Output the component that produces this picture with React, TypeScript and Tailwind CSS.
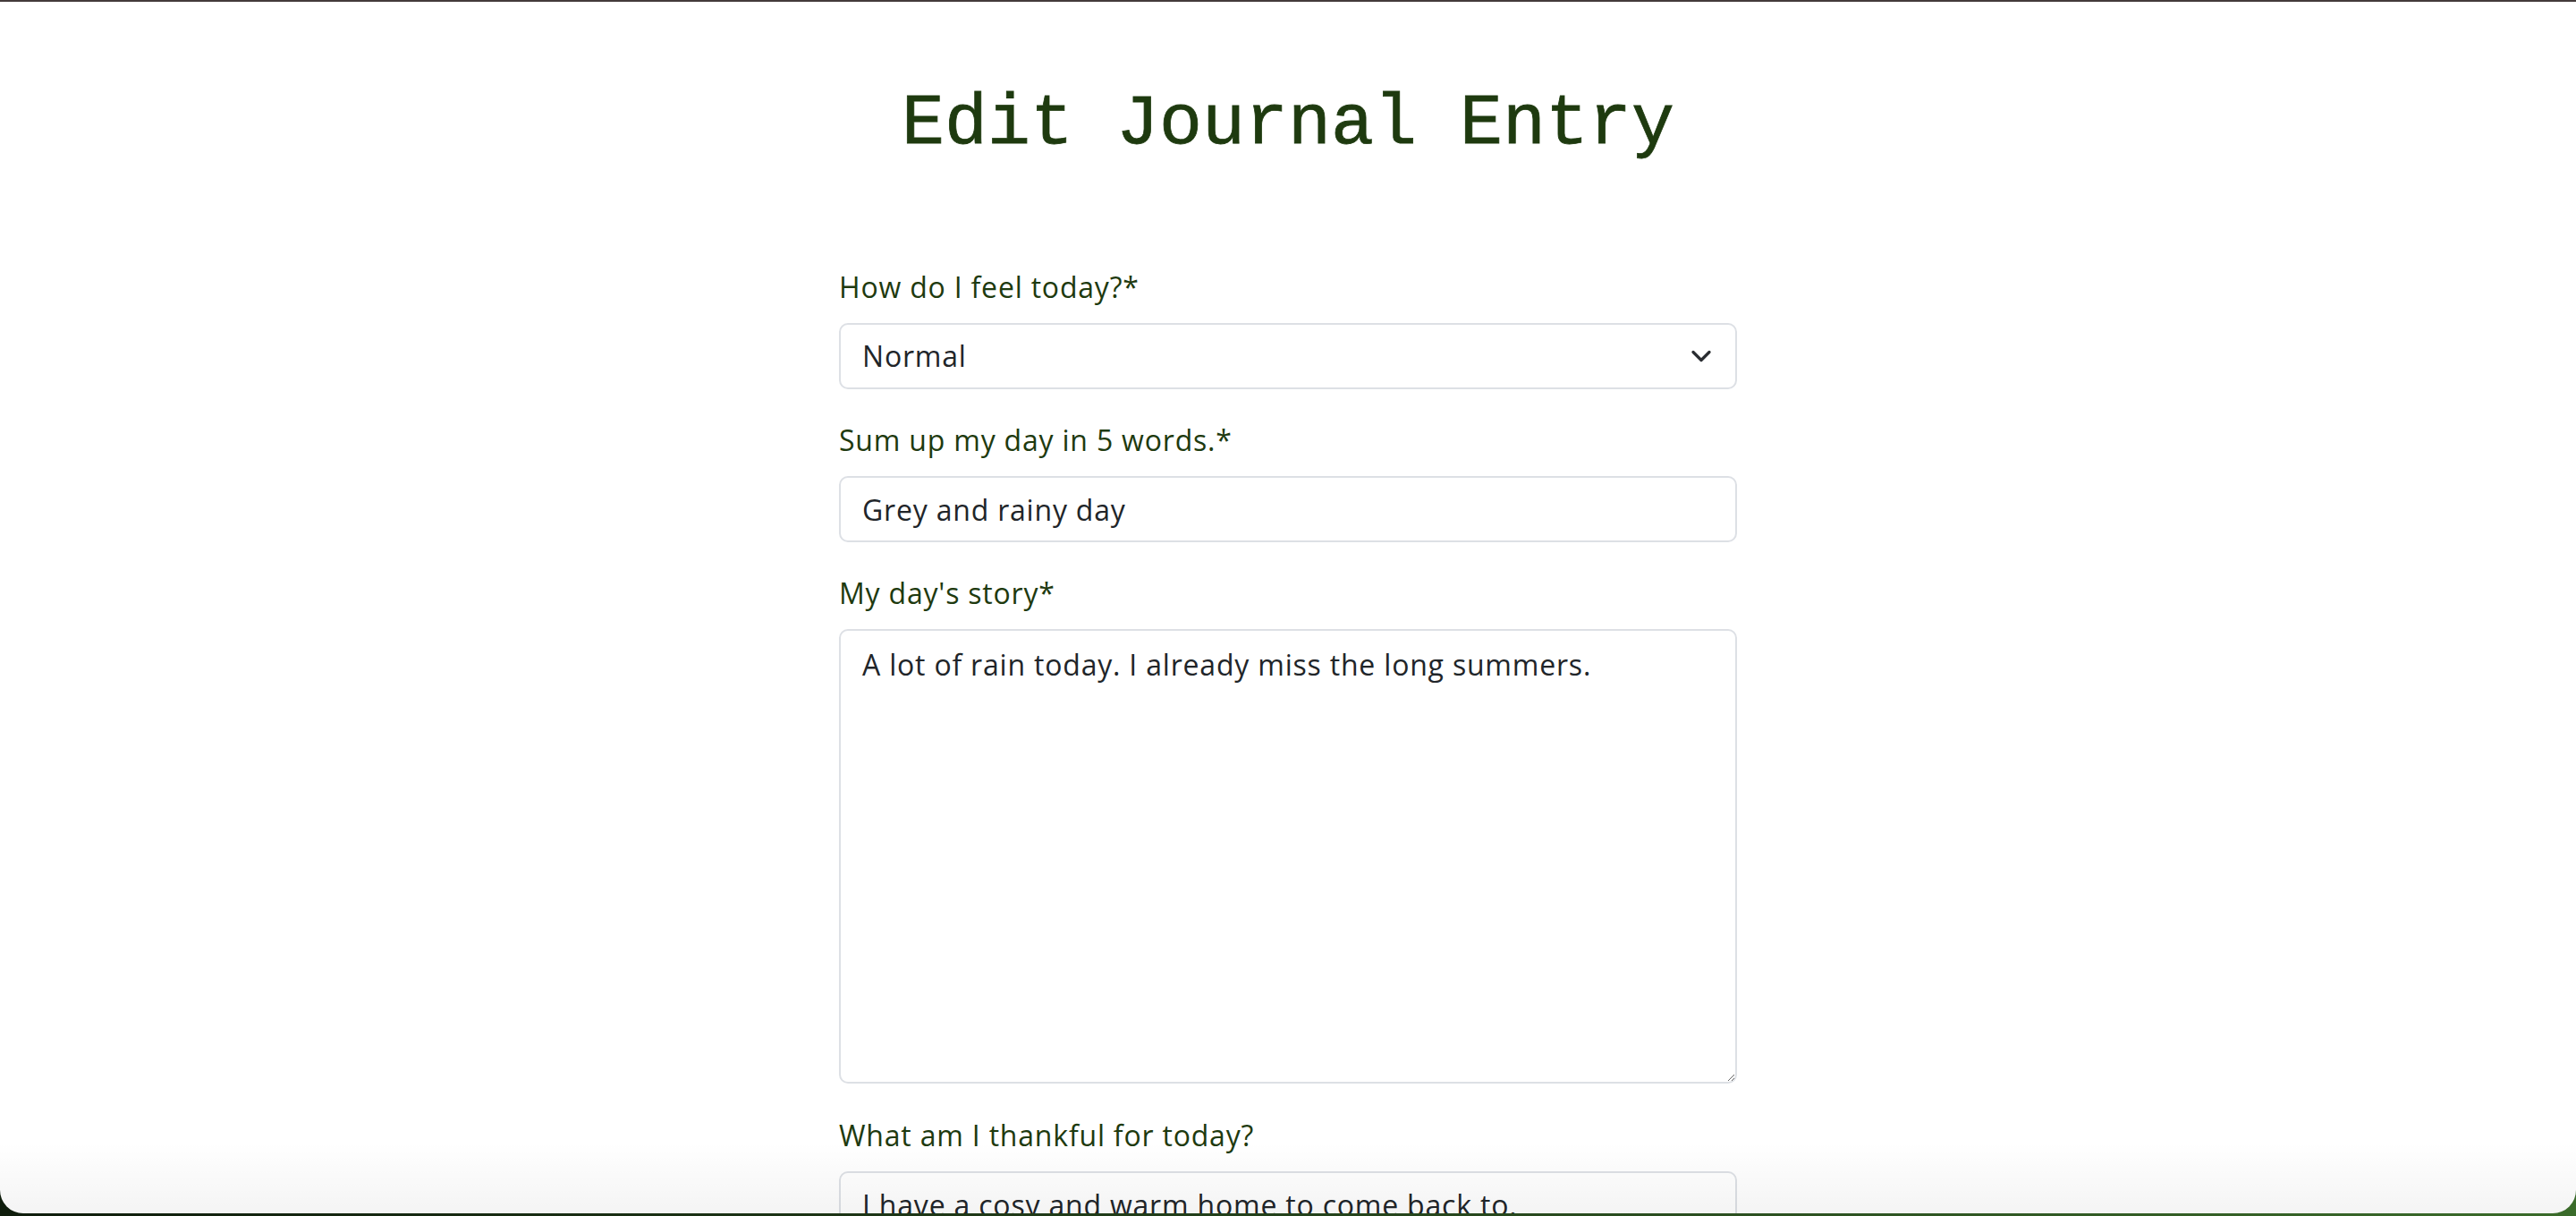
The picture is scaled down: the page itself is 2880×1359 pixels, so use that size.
import React from "react";
import { ChevronDown } from "lucide-react";

const labelCls =
  "block text-[32px] leading-[48px] tracking-[0.8px] text-[#1e3a0f] mb-[16px] font-['Open_Sans',sans-serif]";
const boxCls =
  "w-full h-[74px] border-2 border-[#dde0e5] rounded-[10px] bg-white px-[24px] text-[32px] tracking-[0.8px] text-[#212529] outline-none font-['Open_Sans',sans-serif]";

export default function App() {
  return (
    <div className="h-[1359px] w-full flex flex-col overflow-hidden bg-gradient-to-r from-[#0f1d0c] to-[#3a6b2a]">
      <div className="h-[2px] w-full bg-[#433b3b] shrink-0" />
      <div className="relative flex-1 bg-white rounded-b-[26px] overflow-hidden">
        <div className="flex flex-col items-center pt-[89px]">
          <h1 className="text-[80px] leading-[96px] text-[#1e3a0f] font-['Liberation_Mono',monospace] font-normal [-webkit-text-stroke:0.8px_#1e3a0f]">
            Edit Journal Entry
          </h1>
          <form className="w-[1004px] mt-[110px] flex flex-col">
            <div>
              <label className={labelCls}>How do I feel today?*</label>
              <div className="relative">
                <select
                  defaultValue="Normal"
                  className={boxCls + " appearance-none"}
                >
                  <option>Happy</option>
                  <option>Normal</option>
                  <option>Sad</option>
                </select>
                <ChevronDown
                  className="absolute right-[22px] top-[19px] pointer-events-none text-[#2a2d31]"
                  size={36}
                  strokeWidth={2.2}
                />
              </div>
            </div>
            <div className="mt-[33px]">
              <label className={labelCls}>Sum up my day in 5 words.*</label>
              <input type="text" defaultValue="Grey and rainy day" className={boxCls} />
            </div>
            <div className="mt-[33px]">
              <label className={labelCls}>My day's story*</label>
              <textarea
                defaultValue="A lot of rain today. I already miss the long summers."
                className="block w-full h-[508px] border-2 border-[#dde0e5] rounded-[10px] bg-white px-[24px] py-[14px] text-[32px] leading-[48px] tracking-[0.8px] text-[#212529] outline-none font-['Open_Sans',sans-serif]"
              />
            </div>
            <div className="mt-[34px]">
              <label className={labelCls}>What am I thankful for today?</label>
              <input
                type="text"
                defaultValue="I have a cosy and warm home to come back to."
                className={boxCls}
              />
            </div>
          </form>
        </div>
        <div className="absolute left-0 right-0 bottom-0 h-[80px] pointer-events-none bg-gradient-to-b from-transparent to-[rgba(0,0,0,0.045)]" />
      </div>
      <div className="h-[3px] shrink-0" />
    </div>
  );
}
